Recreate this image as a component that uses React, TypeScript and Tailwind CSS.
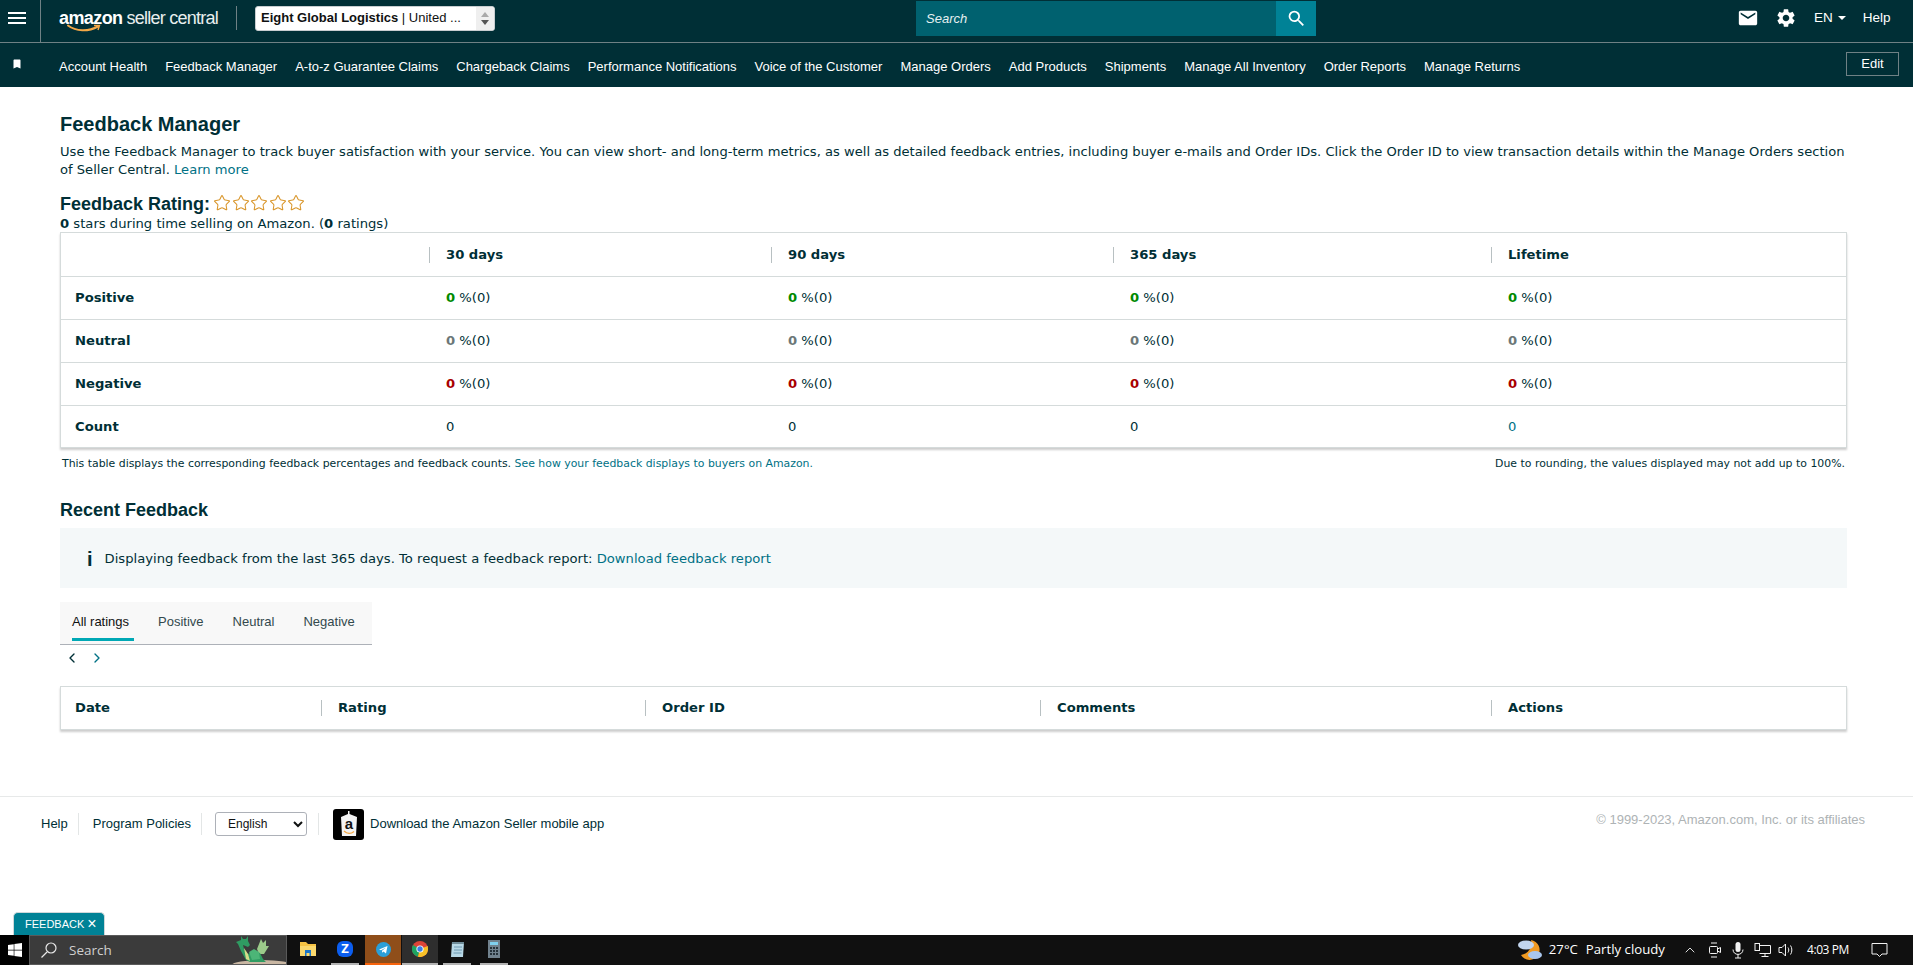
import { MdBookmark, MdEmail, MdMenu, MdSearch, MdSettings } from "react-icons/md";
import { FaWindows } from "react-icons/fa";
import { ChevronLeft, ChevronRight, ChevronUp, Star } from "lucide-react";

const arial = "font-['Liberation_Sans',Arial,sans-serif]";

const navItems = [
  "Account Health",
  "Feedback Manager",
  "A-to-z Guarantee Claims",
  "Chargeback Claims",
  "Performance Notifications",
  "Voice of the Customer",
  "Manage Orders",
  "Add Products",
  "Shipments",
  "Manage All Inventory",
  "Order Reports",
  "Manage Returns",
];

const rows = [
  { label: "Positive", color: "text-[#008a00]" },
  { label: "Neutral", color: "text-[#6c7778]" },
  { label: "Negative", color: "text-[#a80000]" },
];

function TopBar() {
  return (
    <div className={`flex h-[43px] items-center border-b border-[#6f8185] bg-[#002f36] pb-[6px] text-white ${arial}`}>
      <div className="-mb-[6px] flex w-[41px] items-center justify-center self-stretch border-r border-[#6f8185] pr-[7px] pb-[6px]">
        <MdMenu className="h-[24px] w-[24px]" />
      </div>
      {/* Logo */}
      <div className="relative ml-[18px] flex h-[30px] w-[160px] items-start whitespace-nowrap text-[18px] leading-[30px]">
        <span className="font-bold tracking-[-0.6px]">amazon</span>
        <span className="ml-[4px] text-[18px] font-normal tracking-[-0.75px] text-[#e8eeee]">seller central</span>
        <svg className="absolute top-[21px] left-[8px]" width="36" height="10" viewBox="0 0 36 10" fill="none">
          <path d="M1 1.5C9 7.5 21 8 31 2.5" stroke="#f3a847" strokeWidth="2" strokeLinecap="round" />
          <path d="M27 1.5L32.5 1.5L31 6" stroke="#f3a847" strokeWidth="1.4" />
        </svg>
      </div>
      <div className="ml-[17px] h-[24px] w-px bg-[#6f8185]" />
      <div className="ml-[18px] flex h-[25px] w-[240px] items-center overflow-hidden rounded-[3px] border border-[#c8cdd0] bg-white text-[13px] text-[#0f1111]">
        <div className="flex-1 pl-[5px] whitespace-nowrap">
          <span className="font-bold">Eight Global Logistics</span> | United ...
        </div>
        <div className="flex h-full w-[18px] flex-col items-center justify-center gap-[3px] bg-[#efefef]">
          <div className="h-0 w-0 border-x-[4px] border-b-[5px] border-x-transparent border-b-[#a9a9a9]" />
          <div className="h-0 w-0 border-x-[4px] border-t-[5px] border-x-transparent border-t-[#555]" />
        </div>
      </div>
      <div className="mt-[1px] ml-[421px] flex h-[35px] w-[400px] self-start">
        <div className="flex flex-1 items-center bg-[#00616f] pl-[10px] text-[13px] text-[#e6f0f1] italic">Search</div>
        <div className="flex w-[40px] items-center justify-center bg-[#008296]">
          <MdSearch className="h-[21px] w-[21px]" />
        </div>
      </div>
      <MdEmail className="ml-[421px] h-[22px] w-[22px]" />
      <MdSettings className="ml-[16px] h-[22px] w-[22px]" />
      <span className="ml-[17px] text-[13.5px]">EN</span>
      <div className="ml-[5px] h-0 w-0 border-x-[4px] border-t-[4px] border-x-transparent border-t-white" />
      <span className="ml-[17px] text-[13.5px]">Help</span>
    </div>
  );
}

function NavBar() {
  return (
    <div className={`flex h-[44px] items-center bg-[#002f36] pr-[14px] pl-[11px] text-[13px] text-white ${arial}`}>
      <MdBookmark className="-mt-[3px] h-[12px] w-[12px]" />
      <div className="ml-[36px] flex flex-1 items-center gap-[18px] pt-[4px] whitespace-nowrap">
        {navItems.map((item) => (
          <span key={item}>{item}</span>
        ))}
      </div>
      <div className="-mt-[2px] flex h-[24px] w-[53px] items-center justify-center border border-[#6f8185] text-[13px]">Edit</div>
    </div>
  );
}

function HeaderCell({ label, divider = true }: { label?: string; divider?: boolean }) {
  return (
    <div className="flex items-center font-bold">
      {divider && <div className="-ml-[3px] mr-[16px] h-[16px] w-px bg-[#b8c0c2]" />}
      {label}
    </div>
  );
}

function SummaryTable() {
  const cols = "grid-cols-[371px_342px_342px_378px_1fr]";
  return (
    <div className="border border-[#d5dbdb] shadow-[0_2px_2px_rgba(0,0,0,0.2)]">
      <div className={`grid h-[43px] ${cols}`}>
        <div />
        <HeaderCell label="30 days" />
        <HeaderCell label="90 days" />
        <HeaderCell label="365 days" />
        <HeaderCell label="Lifetime" />
      </div>
      {rows.map((row) => (
        <div key={row.label} className={`grid h-[43px] items-center border-t border-[#d5dbdb] ${cols}`}>
          <div className="pl-[14px] font-bold">{row.label}</div>
          {[0, 1, 2, 3].map((i) => (
            <div key={i} className="pl-[14px]">
              <span className={`font-bold ${row.color}`}>0</span> %(0)
            </div>
          ))}
        </div>
      ))}
      <div className={`grid h-[42px] items-center border-t border-[#d5dbdb] ${cols}`}>
        <div className="pl-[14px] font-bold">Count</div>
        <div className="pl-[14px]">0</div>
        <div className="pl-[14px]">0</div>
        <div className="pl-[14px]">0</div>
        <div className="pl-[14px] text-[#007185]">0</div>
      </div>
    </div>
  );
}

function FeedbackTable() {
  return (
    <div className="mt-[16px] grid h-[44px] grid-cols-[249px_324px_395px_451px_1fr] border border-[#d5dbdb] pl-[14px] shadow-[0_2px_2px_rgba(0,0,0,0.2)]">
      <HeaderCell label="Date" divider={false} />
      <HeaderCell label="Rating" />
      <HeaderCell label="Order ID" />
      <HeaderCell label="Comments" />
      <HeaderCell label="Actions" />
    </div>
  );
}

function Tabs() {
  const labels = ["Positive", "Neutral", "Negative"];
  return (
    <div className={`mt-[14px] flex h-[43px] w-[312px] items-start border-b border-[#adb1b8] bg-[#f8f8f8] pl-[12px] text-[13px] ${arial}`}>
      <div className="flex h-[39px] w-[62px] items-center border-b-[3px] border-[#00a8b5] pt-[3px] text-[#0f1111]">All ratings</div>
      <div className="ml-[24px] flex h-[39px] items-center gap-[29px] text-[#33494d]">
        {labels.map((label) => (
          <span key={label}>{label}</span>
        ))}
      </div>
    </div>
  );
}

function Footer() {
  return (
    <div className={`flex h-[139px] items-start border-t border-[#e7e9e9] pt-[11px] pr-[48px] pl-[41px] text-[13px] text-[#002f36] ${arial}`}>
      <div className="flex h-[32px] items-center">
        <span>Help</span>
        <div className="mr-[14px] ml-[10px] h-[22px] w-px bg-[#e3e6e6]" />
        <span>Program Policies</span>
        <div className="mr-[13px] ml-[10px] h-[22px] w-px bg-[#e3e6e6]" />
        <select className="h-[24px] w-[92px] rounded-[3px] border border-[#adb1b8] bg-white pl-[8px] text-[12px] text-[#0f1111]">
          <option>English</option>
        </select>
        <div className="mr-[14px] ml-[11px] h-[22px] w-px bg-[#e3e6e6]" />
        <div className="flex h-[31px] w-[31px] items-center justify-center rounded-[3px] bg-black">
          <svg width="20" height="28" viewBox="0 0 20 28">
            <path d="M9 1L10.5 1L10.5 4L18 7L17 26L3 26L2 7L9 4Z" fill="#f4f4f4" />
            <text x="10" y="19" textAnchor="middle" fontSize="15" fontWeight="700" fontFamily="Liberation Sans" fill="#111">a</text>
            <path d="M5 21C8 24 12 24 15 21.5" stroke="#f3a847" strokeWidth="1.4" fill="none" />
          </svg>
        </div>
        <span className="ml-[6px]">Download the Amazon Seller mobile app</span>
      </div>
      <div className="-mt-[4px] ml-auto flex h-[32px] items-center text-[13px] text-[#aeb3b5]">© 1999-2023, Amazon.com, Inc. or its affiliates</div>
    </div>
  );
}

function Dragon() {
  return (
    <svg width="56" height="30" viewBox="0 0 56 30">
      <ellipse cx="32" cy="31" rx="30" ry="5" fill="#c9b7a3" />
      <path d="M27 15L31 5L33 9L36 6L36 12L39 12L34 20L29 20Z" fill="#9ccb8a" />
      <path d="M11 2L13 5L16 5L18 2L18 7L20 11L18 13L13 11L14 15L18 20L24 17L30 19L33 25L36 28L20 28L16 26L11 17L8 10L6 8L11 6Z" fill="#2f9c62" />
      <path d="M19 18L24 15L29 18L30 25L22 26Z" fill="#4cb577" />
      <path d="M14 14L18 20L20 27L16 25Z" fill="#d5dd8a" />
    </svg>
  );
}

function Taskbar() {
  return (
    <div className="flex h-[30px] items-stretch bg-[#101010] font-['Open_Sans',sans-serif] text-white">
      <div className="flex w-[29px] items-center justify-center bg-black">
        <FaWindows className="h-[16px] w-[16px]" />
      </div>
      <div className="flex w-[258px] items-center overflow-hidden border border-[#5a5a5a] bg-[#3b3b3b] pl-[10px] text-[13.5px] text-[#d0d0d0]">
        <svg width="18" height="18" viewBox="0 0 18 18" fill="none" stroke="#e8e8e8" strokeWidth="1.2">
          <circle cx="11" cy="7" r="5" />
          <path d="M7 11L1.5 16.5" />
        </svg>
        <span className="ml-[11px]">Search</span>
        <div className="ml-auto flex h-full items-end"><Dragon /></div>
      </div>

      {/* Pinned apps */}
      <div className="ml-[3px] flex">
        <TaskIcon width="w-[36px]" underline="bg-transparent">
          <svg width="18" height="16" viewBox="0 0 18 16">
            <path d="M1 1H7L9 3H17V15H1Z" fill="#f6c344" />
            <path d="M1 5H17V15H1Z" fill="#fbd96e" />
            <path d="M6 9H12V15H10.5V12H7.5V15H6Z" fill="#1b75c8" />
          </svg>
        </TaskIcon>
        <div className="ml-[5px]" />
        <TaskIcon width="w-[28px]" underline="bg-[#b3b3b3]">
          <div className="flex h-[16px] w-[16px] items-center justify-center rounded-[6px] bg-[#0b5ef0] text-[13px] font-bold text-white">Z</div>
        </TaskIcon>
        <div className="ml-[6px]" />
        <TaskIcon width="w-[36px]" underline="bg-[#f7630c]" bg="bg-[#8f4e1a]">
          <svg width="15" height="15" viewBox="0 0 15 15">
            <circle cx="7.5" cy="7.5" r="7.5" fill="#2b9fd8" />
            <path d="M3 7.5L11.5 4L10 11.5L7.5 9.5L6.2 10.8L6 8.8L10 5.5L5 8.3Z" fill="#fff" />
          </svg>
        </TaskIcon>
        <div className="ml-px" />
        <TaskIcon width="w-[36px]" underline="bg-[#b3b3b3]" bg="bg-[#2e2e2e]">
          <svg width="16" height="16" viewBox="0 0 16 16">
            <circle cx="8" cy="8" r="8" fill="#dd4437" />
            <path d="M8 8L1 4A8 8 0 0 0 6 15.8Z" fill="#1da462" />
            <path d="M8 8L6 15.8A8 8 0 0 0 16 8L15.8 5Z" fill="#f6c028" />
            <circle cx="8" cy="8" r="3.6" fill="#fff" />
            <circle cx="8" cy="8" r="2.7" fill="#3a7ee6" />
          </svg>
        </TaskIcon>
        <div className="ml-[5px]" />
        <TaskIcon width="w-[28px]" underline="bg-[#b3b3b3]">
          <svg width="15" height="17" viewBox="0 0 15 17">
            <path d="M2 1H14L13 16H1Z" fill="#b8d8e6" />
            <path d="M2 1H14V3H2Z" fill="#6f8c99" />
            <path d="M4 6H12M4 9H12M3.5 12H11.5" stroke="#5c8ba3" strokeWidth="0.8" />
          </svg>
        </TaskIcon>
        <div className="ml-[9px]" />
        <TaskIcon width="w-[28px]" underline="bg-[#b3b3b3]">
          <svg width="12" height="18" viewBox="0 0 12 18">
            <rect width="12" height="18" fill="#71828e" />
            <rect x="2" y="2" width="8" height="3" fill="#7fd0ee" />
            <path d="M2 7H4V9H2ZM5 7H7V9H5ZM8 7H10V9H8ZM2 10H4V12H2ZM5 10H7V12H5ZM8 10H10V12H8ZM2 13H4V15H2ZM5 13H7V15H5ZM8 13H10V15H8Z" fill="#26323a" />
          </svg>
        </TaskIcon>
      </div>

      {/* Tray */}
      <div className="ml-auto flex items-center pr-[25px] text-[13.2px]">
        <svg width="26" height="24" viewBox="0 0 26 24">
          <path d="M14 2A10 10 0 1 1 4 17A12 12 0 0 0 14 2Z" fill="#f09a22" />
          <ellipse cx="9" cy="7" rx="8" ry="4.5" fill="#c3d6ef" />
          <ellipse cx="18" cy="17" rx="7" ry="4" fill="#a9c6ec" />
        </svg>
        <span className="ml-[6px]">27°C</span>
        <span className="ml-[8px]">Partly cloudy</span>
        <ChevronUp className="ml-[17px] h-[16px] w-[16px]" strokeWidth={1.3} />
        <svg className="ml-[10px]" width="14" height="18" viewBox="0 0 14 18" fill="none" stroke="#f2f2f2" strokeWidth="1">
          <rect x="1.5" y="5.5" width="8" height="7" rx="1" />
          <path d="M9.5 8L12.5 6.5V11.5L9.5 10M3 2H9M3 16H9" />
        </svg>
        <svg className="ml-[10px]" width="12" height="18" viewBox="0 0 12 18" fill="none">
          <rect x="3.5" y="1" width="5" height="10" rx="2.5" fill="#f2f2f2" />
          <path d="M1 8.5C1 15 11 15 11 8.5M6 13V17M3 17H9" stroke="#f2f2f2" strokeWidth="1" />
        </svg>
        <svg className="ml-[10px]" width="17" height="16" viewBox="0 0 17 16" fill="none" stroke="#f2f2f2" strokeWidth="1">
          <path d="M5.5 3.5H16.5V11.5H5.5M11 11.5V14.5M7.5 14.5H14.5" />
          <rect x="1" y="1.5" width="4.5" height="7" fill="#101010" />
        </svg>
        <svg className="ml-[7px]" width="17" height="16" viewBox="0 0 17 16" fill="none" stroke="#f2f2f2" strokeWidth="1">
          <path d="M1 5.5H4L7.5 2V14L4 10.5H1Z" />
          <path d="M10 5.5C11 7 11 9 10 10.5M12.5 3.5C14.3 6 14.3 10 12.5 12.5" />
        </svg>
        <span className="ml-[12px] text-[12px] tracking-[-0.4px]">4:03 PM</span>
        <svg className="ml-[22px]" width="17" height="16" viewBox="0 0 17 16" fill="none" stroke="#f2f2f2" strokeWidth="1">
          <path d="M1 1.5H16V12H11L8.5 14.5L6 12H1Z" />
        </svg>
      </div>
    </div>
  );
}

function TaskIcon({ width, underline, bg = "", children }: { width: string; underline: string; bg?: string; children: React.ReactNode }) {
  return (
    <div className={`flex h-full flex-col ${width} ${bg}`}>
      <div className="flex flex-1 items-center justify-center">{children}</div>
      <div className={`h-[2px] ${underline}`} />
    </div>
  );
}

export default function App() {
  return (
    <div className="relative flex h-screen flex-col overflow-hidden bg-white text-[#002f36]">
      <TopBar />
      <NavBar />
      <main className="h-[709px] px-[60px] pt-[25px] pr-[66px] font-['DejaVu_Sans',Verdana,sans-serif] text-[13.15px] leading-[18px]">
        <h1 className={`text-[20px] leading-[24px] font-bold ${arial}`}>Feedback Manager</h1>
        <p className="mt-[7px] -mr-[4px] text-[13.1px]">
          Use the Feedback Manager to track buyer satisfaction with your service. You can view short- and long-term metrics, as well as detailed feedback entries, including buyer e-mails and Order IDs. Click the Order ID to view transaction details within the Manage Orders section of Seller Central.{" "}
          <a className="text-[#007185]">Learn more</a>
        </p>
        <div className="mt-[14px] flex h-[22px] items-center">
          <h2 className={`text-[18px] leading-[22px] font-bold ${arial}`}>Feedback Rating:</h2>
          <div className="-mt-[3px] ml-[3px] flex gap-[0.6px]">
            {[0, 1, 2, 3, 4].map((i) => (
              <Star key={i} className="h-[18px] w-[18px] text-[#d9962b]" strokeWidth={1.4} />
            ))}
          </div>
        </div>
        <p className="leading-[17px]">
          <b>0</b> stars during time selling on Amazon. (<b>0</b> ratings)
        </p>
        <SummaryTable />
        <div className="mt-[8px] flex justify-between px-[2px] text-[10.9px] leading-[16px]">
          <p>
            This table displays the corresponding feedback percentages and feedback counts.{" "}
            <a className="text-[#007185]">See how your feedback displays to buyers on Amazon.</a>
          </p>
          <p>Due to rounding, the values displayed may not add up to 100%.</p>
        </div>
        <h2 className={`mt-[27px] text-[18px] leading-[22px] font-bold ${arial}`}>Recent Feedback</h2>
        <div className="mt-[7px] flex h-[60px] items-center bg-[#f4f8f9] pt-[2px] pl-[27px]">
          <span className={`mr-[12px] text-[20px] font-bold ${arial}`}>i</span>
          <span>
            Displaying feedback from the last 365 days. To request a feedback report: <a className="text-[#007185]">Download feedback report</a>
          </span>
        </div>
        <Tabs />
        <div className="flex h-[25px] items-center gap-[9px] pl-[4px]">
          <ChevronLeft className="h-[16px] w-[16px] text-[#002f36]" strokeWidth={2} />
          <ChevronRight className="h-[16px] w-[16px] text-[#007185]" strokeWidth={2} />
        </div>
        <FeedbackTable />
      </main>
      <Footer />
      <Taskbar />
      {/* Feedback tab floats over the page */}
      <div className={`absolute bottom-[30px] left-[13px] flex h-[23px] w-[92px] items-center gap-[3px] rounded-t-[5px] border border-b-0 border-[#cfd8da] bg-[#008296] pl-[11px] text-[11px] text-white ${arial}`}>
        FEEDBACK <span className="text-[16px] leading-none">×</span>
      </div>
    </div>
  );
}
